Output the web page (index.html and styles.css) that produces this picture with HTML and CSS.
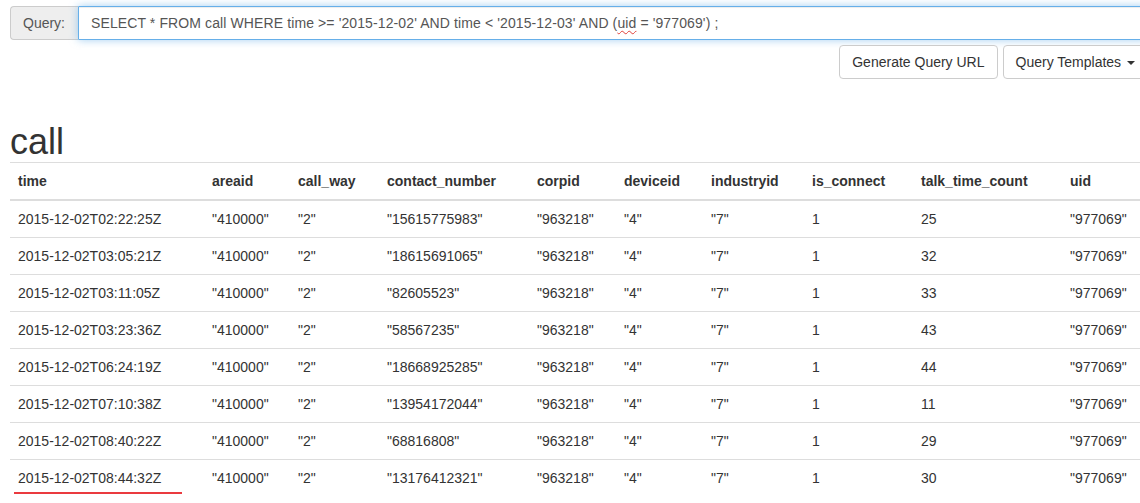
FILE: index.html
```html
<!DOCTYPE html>
<html>
<head>
<meta charset="utf-8">
<link rel="stylesheet" href="styles.css">
</head>
<body>
<div class="page">
  <div class="input-group">
    <span class="addon">Query:</span>
    <div class="form-control">SELECT * FROM call WHERE time &gt;= '2015-12-02' AND time &lt; '2015-12-03' AND (<span class="spell">uid</span> = '977069') ;</div>
  </div>
  <div class="toolbar">
    <button class="btn">Generate Query URL</button>
    <button class="btn">Query Templates <span class="caret"></span></button>
  </div>
  <h1 class="series">call</h1>
  <table class="table">
    <colgroup>
      <col style="width:194px"><col style="width:86px"><col style="width:89px"><col style="width:150px"><col style="width:87px"><col style="width:87px"><col style="width:101px"><col style="width:109px"><col style="width:149px"><col style="width:86px">
    </colgroup>
    <thead>
      <tr><th>time</th><th>areaid</th><th>call_way</th><th>contact_number</th><th>corpid</th><th>deviceid</th><th>industryid</th><th>is_connect</th><th>talk_time_count</th><th>uid</th></tr>
    </thead>
    <tbody>
      <tr><td>2015-12-02T02:22:25Z</td><td>"410000"</td><td>"2"</td><td>"15615775983"</td><td>"963218"</td><td>"4"</td><td>"7"</td><td>1</td><td>25</td><td>"977069"</td></tr>
      <tr><td>2015-12-02T03:05:21Z</td><td>"410000"</td><td>"2"</td><td>"18615691065"</td><td>"963218"</td><td>"4"</td><td>"7"</td><td>1</td><td>32</td><td>"977069"</td></tr>
      <tr><td>2015-12-02T03:11:05Z</td><td>"410000"</td><td>"2"</td><td>"82605523"</td><td>"963218"</td><td>"4"</td><td>"7"</td><td>1</td><td>33</td><td>"977069"</td></tr>
      <tr><td>2015-12-02T03:23:36Z</td><td>"410000"</td><td>"2"</td><td>"58567235"</td><td>"963218"</td><td>"4"</td><td>"7"</td><td>1</td><td>43</td><td>"977069"</td></tr>
      <tr><td>2015-12-02T06:24:19Z</td><td>"410000"</td><td>"2"</td><td>"18668925285"</td><td>"963218"</td><td>"4"</td><td>"7"</td><td>1</td><td>44</td><td>"977069"</td></tr>
      <tr><td>2015-12-02T07:10:38Z</td><td>"410000"</td><td>"2"</td><td>"13954172044"</td><td>"963218"</td><td>"4"</td><td>"7"</td><td>1</td><td>11</td><td>"977069"</td></tr>
      <tr><td>2015-12-02T08:40:22Z</td><td>"410000"</td><td>"2"</td><td>"68816808"</td><td>"963218"</td><td>"4"</td><td>"7"</td><td>1</td><td>29</td><td>"977069"</td></tr>
      <tr><td><span class="marked">2015-12-02T08:44:32Z</span></td><td>"410000"</td><td>"2"</td><td>"13176412321"</td><td>"963218"</td><td>"4"</td><td>"7"</td><td>1</td><td>30</td><td>"977069"</td></tr>
    </tbody>
  </table>
</div>
</body>
</html>
```
FILE: styles.css
```css
html, body {
  margin: 0;
  padding: 0;
  overflow: hidden;
  background: #fff;
}
body {
  font-family: "Liberation Sans", Arial, Helvetica, sans-serif;
  font-size: 14px;
  line-height: 1.42857;
  color: #333;
}
.page {
  width: 1138px;
  margin-left: 10px;
  padding-top: 6px;
}
.input-group {
  display: flex;
  height: 34px;
}
.addon {
  box-sizing: border-box;
  width: 68px;
  padding: 6px 12px;
  background: #eee;
  border: 1px solid #ccc;
  border-right: 0;
  border-radius: 4px 0 0 4px;
  color: #555;
  font-size: 14px;
  line-height: 20px;
}
.form-control {
  flex: 1;
  box-sizing: border-box;
  height: 34px;
  padding: 6px 12px;
  border: 1px solid #66afe9;
  border-radius: 0 4px 4px 0;
  color: #555;
  line-height: 20px;
  white-space: pre;
  letter-spacing: 0.11px;
  box-shadow: inset 0 1px 1px rgba(0,0,0,.075), 0 0 8px rgba(102,175,233,.6);
}
.spell {
  text-decoration: underline wavy #e0403a;
  text-decoration-thickness: 1px;
  text-underline-offset: 2px;
}
.toolbar {
  display: flex;
  justify-content: flex-end;
  gap: 5px;
  margin-top: 5px;
}
.btn {
  font-family: inherit;
  font-size: 14px;
  line-height: 20px;
  color: #333;
  background: #fff;
  border: 1px solid #ccc;
  border-radius: 4px;
  padding: 6px 12px;
  height: 34px;
  margin: 0;
}
.caret {
  display: inline-block;
  width: 0;
  height: 0;
  margin-left: 2px;
  vertical-align: middle;
  border-top: 4px solid #333;
  border-left: 4px solid transparent;
  border-right: 4px solid transparent;
}
.series {
  font-size: 36px;
  font-weight: 500;
  line-height: 1.1;
  margin: 43px 0 0 0;
  color: #333;
}
.table {
  width: 1138px;
  table-layout: fixed;
  border-collapse: collapse;
  border-top: 1px solid #ddd;
}
.table th {
  text-align: left;
  font-weight: bold;
  padding: 8px;
  line-height: 20px;
  border-bottom: 2px solid #ddd;
  white-space: nowrap;
}
.table td {
  padding: 8px;
  line-height: 20px;
  border-top: 1px solid #ddd;
  white-space: nowrap;
}
.marked {
  position: relative;
}
.marked::after {
  content: "";
  position: absolute;
  left: -4px;
  right: -21px;
  bottom: -8px;
  height: 2px;
  background: #ea3a3f;
}
```
